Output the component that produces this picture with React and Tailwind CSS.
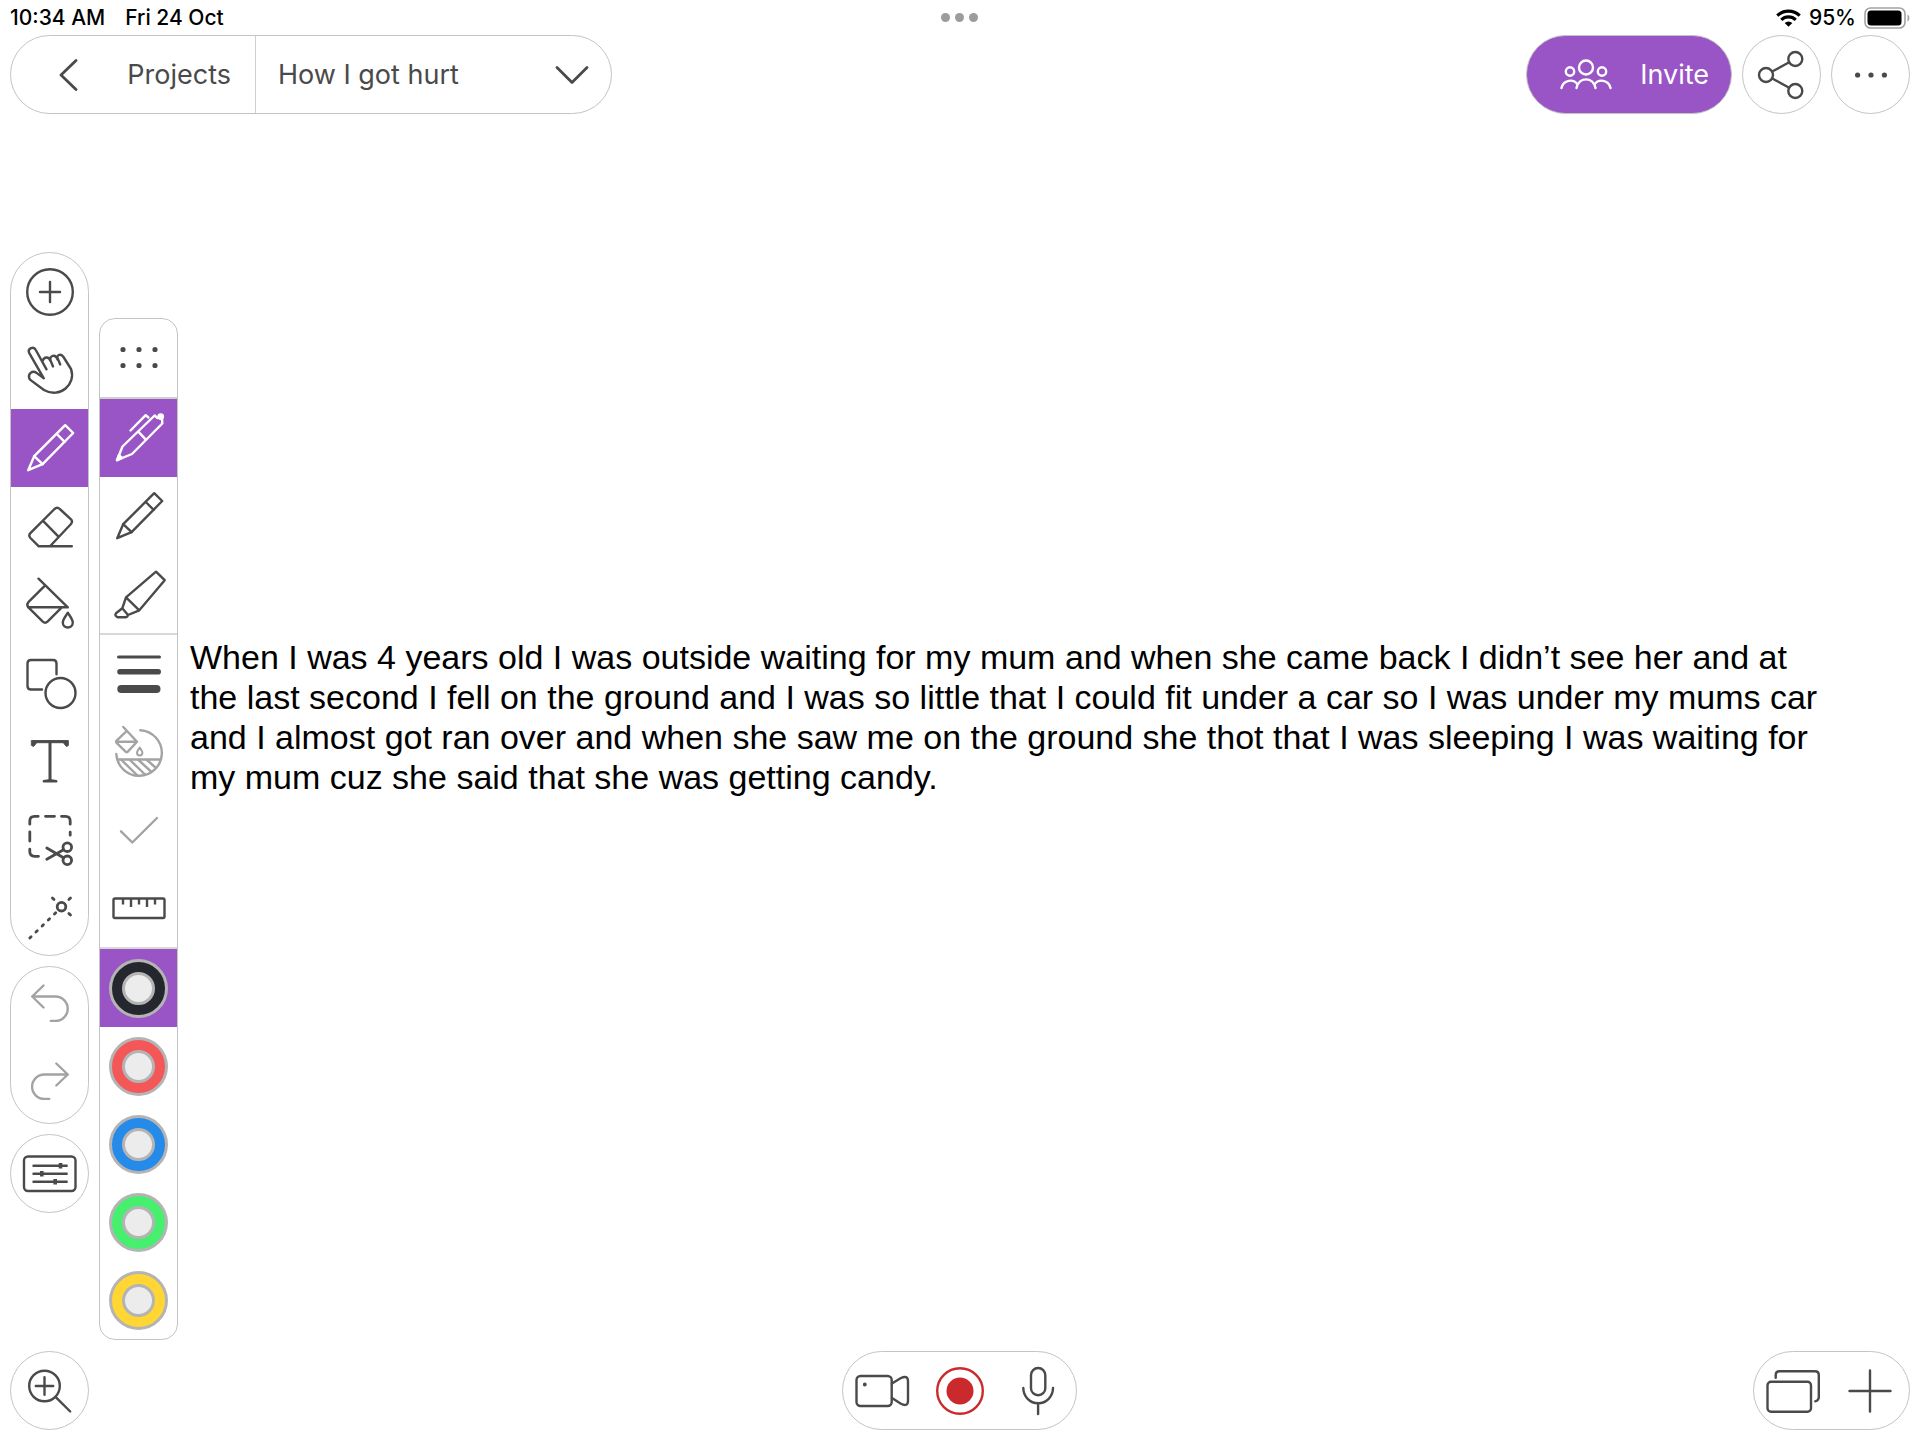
const INK = '#4a4a4a';
const MUTED = '#a3a3a3';

function Icon({ color = INK, width = 2.4, children }) {
  return (
    <svg
      className="size-[72px] shrink-0"
      viewBox="3 3 72 72"
      fill="none"
      stroke={color}
      strokeWidth={width}
      strokeLinecap="round"
      strokeLinejoin="round"
      aria-hidden="true"
    >
      {children}
    </svg>
  );
}

const pencil = (
  <>
    <path d="M54.2 16.2 62.2 24 31.6 55.2 17.2 61.2 23.2 47.2Z" />
    <path d="M45.8 25 53.6 32.8M23.2 47.2 31.6 55.2" />
  </>
);

const tools = [
  { label: 'Add', art: <><circle cx="39" cy="39" r="22.800" /><path d="M39 29V49M29 39H49" /></> },
  {
    label: 'Hand',
    art: (
      <path d="M35.5 38.3 24.8 19C22.8 14.8 16.4 17.3 18 21.7L32.8 47.3 25.2 41.6C21 39.3 17 43 18.2 47Q18.4 48.2 20 49.4L33 59C49 68 65.500 53 60 38L52.5 26C50 22 45.500 24 46.500 27L49.200 33.500M46.500 28.500C45 23 38 24 39.500 29.500L42 35.500M39.500 30C38 25 33 25.500 31.500 30" />
    ),
  },
  { label: 'Pencil', active: true, art: pencil },
  {
    label: 'Eraser',
    art: <path d="M60.800 59.300H27.800L19.400 51Q17.200 48.500 19.400 46.200L43.500 22Q46.200 19.500 48.800 22L60 32.300Q62 34.500 60 37L39.500 58.700M31.800 33.700 47.500 49.700" />,
  },
  {
    label: 'Fill',
    art: (
      <>
        <path d="M27.500 13.700 56.800 42.300H17M34.200 20.300 17.400 37.200Q15.200 39.600 17.400 42.300L31.800 56.700Q34.200 58.800 36.500 56.700L50.800 42.300" />
        <path d="M56.800 47.700C54.500 51.500 51.800 54.500 51.800 57.500A5 5 0 0 0 61.800 57.500C61.800 54.500 59.100 51.500 56.800 47.700Z" />
      </>
    ),
  },
  {
    label: 'Shapes',
    art: (
      <>
        <path d="M45.500 31.300V20.500Q45.500 17 42 17H20Q16.500 17 16.500 20.500V43Q16.500 46.500 20 46.500H31" />
        <circle cx="49.500" cy="50" r="15" />
      </>
    ),
  },
  {
    label: 'Text',
    art: (
      <>
        <path d="M20.700 19.600H57.300V24.500L55.500 25.500 52.300 21.700H25.700L22.500 25.500 20.700 24.500Z" fill={INK} strokeWidth="1" />
        <path d="M39 21V59" strokeWidth="3" />
        <path d="M32.800 60.300H45.300L39 59.300Z" />
      </>
    ),
  },
  {
    label: 'Cut',
    width: 2.8,
    art: (
      <>
        <path d="M18.800 25.200V22Q18.800 17.300 23.500 17.300H27.200M34.500 17.300H43.500M50.500 17.300H54.500Q59.200 17.300 59.200 22V25.200M59.200 33.200V36.200M18.800 32.800V42M18.800 50.200V52.600Q18.800 57.300 23.500 57.300H27.500" />
        <path d="M35.800 49 52.500 58.700M35.800 60.300 52.500 50.700" />
        <circle cx="56.300" cy="48.200" r="4.300" />
        <circle cx="56.300" cy="61.300" r="4.300" />
      </>
    ),
  },
  {
    label: 'Laser pointer',
    width: 2.8,
    art: (
      <>
        <circle cx="50.500" cy="29.700" r="4.300" />
        <path d="M41.400 20.900 43 22.500M59.500 20.900 57.900 22.500M57.900 36.500 59.500 38.100" />
        <path d="M18.800 61 45 35.500" strokeDasharray="1.800 6.800" />
      </>
    ),
  },
];

const history = [
  { label: 'Undo', color: MUTED, art: <path d="M32.500 18.500 21.200 29.500 32.500 40.500M21.200 29.500H44.500A12.200 12.200 0 0 1 44.500 53.900H39.800" /> },
  { label: 'Redo', color: MUTED, art: <path d="M45.300 18.500 56.800 29.500 45.300 40.500M56.800 29.500H33.300A12.200 12.200 0 0 0 33.300 53.900H38.200" /> },
];

const pens = [
  {
    label: 'Pen',
    active: true,
    art: (
      <>
        <path d="M17 61.200 22.500 47.500 54.600 16.500 57.500 19M17 61.200 32 55 62.300 24.500 62 19M38.300 32.700 45.600 40.300M30.500 31.500 45.700 16.200 48.400 18.500" />
        <path d="M17 61.200 19 56 22 59Z" fill="#fff" />
        <circle cx="60.700" cy="17.600" r="2.200" fill="#fff" />
      </>
    ),
  },
  { label: 'Fine pencil', art: pencil },
  {
    label: 'Highlighter',
    art: <path d="M26 42.300 56 16.700 64.700 25.200 39.300 55.300ZM26 42.300 22.300 53.300 28 60 39.300 55.300M22.300 53.300 16 58.300Q14.200 60.500 17.500 62.300H25.300Q27.600 62 28 60" />,
  },
];

const options = [
  {
    label: 'Line thickness',
    art: (
      <>
        <path d="M18.500 22H59.500" strokeWidth="3" />
        <path d="M20 36.700H58.200" strokeWidth="5.600" />
        <path d="M21.300 54H56.500" strokeWidth="8" />
      </>
    ),
  },
  {
    label: 'Fill style',
    color: MUTED,
    art: (
      <>
        <path d="M40.300 17.200A22.800 22.800 0 1 1 16.300 41M17.500 46.500H60.500" />
        <path d="M23.300 14 37 28.700 27.800 38.600Q26.700 39.700 25.600 38.600L16.600 29.800Q15.500 28.700 16.600 27.600L26.700 18M16.500 28.700H37" />
        <path d="M39.700 34.500C38.500 36.500 37 38 37 39.700A2.700 2.700 0 0 0 42.400 39.700C42.400 38 40.900 36.500 39.700 34.500Z" strokeWidth="2" />
        <path d="M21.500 47 37.500 62.500M30 47 45 61.500M38.500 47 51 58.500M47 47 56 55" />
      </>
    ),
  },
  { label: 'Confirm', color: MUTED, art: <path d="M21 40.300 32.300 51.500 57 27" /> },
  {
    label: 'Ruler',
    art: (
      <>
        <rect x="13.500" y="29.500" width="51" height="19.500" rx="1.500" />
        <path d="M23 30V35.500M31 30V38M39 30V35.500M47 30V38M55 30V35.500" strokeLinecap="butt" />
      </>
    ),
  },
];

const swatches = [
  { label: 'Black', fill: 'bg-[#25272e]', active: true },
  { label: 'Red', fill: 'bg-[#f45757]' },
  { label: 'Blue', fill: 'bg-[#258ae8]' },
  { label: 'Green', fill: 'bg-[#46f06e]' },
  { label: 'Yellow', fill: 'bg-[#ffd634]' },
];

function Cell({ item }) {
  return (
    <button
      type="button"
      aria-label={item.label}
      aria-pressed={item.active ? true : undefined}
      className={`flex h-[78px] w-full items-center justify-center ${item.active ? 'bg-[#9955c6]' : ''}`}
    >
      <Icon color={item.active ? '#fff' : item.color} width={item.width}>{item.art}</Icon>
    </button>
  );
}

function RoundButton({ label, children }) {
  return (
    <button type="button" aria-label={label} className="flex size-[79px] items-center justify-center rounded-full border border-[#c4c4c4] bg-white">
      <Icon>{children}</Icon>
    </button>
  );
}

function StatusBar() {
  return (
    <div className="grid h-[35px] grid-cols-3 items-center px-[10px] text-[21px] font-medium text-black">
      <div className="flex gap-5">
        <span>10:34 AM</span>
        <span>Fri 24 Oct</span>
      </div>
      <div className="flex justify-center gap-[5px]">
        <span className="size-[9px] rounded-full bg-[#9c9c9c]" />
        <span className="size-[9px] rounded-full bg-[#9c9c9c]" />
        <span className="size-[9px] rounded-full bg-[#9c9c9c]" />
      </div>
      <div className="flex items-center justify-end gap-2">
        <svg className="h-[18px] w-[25px]" viewBox="0 0 25 18" fill="none" stroke="#000" strokeWidth="3.200" aria-hidden="true">
          <path d="M1.300 6.700A16 16 0 0 1 23.700 6.700M5.300 10.800A10.300 10.300 0 0 1 19.700 10.800" />
          <path d="M12.500 17.800 8.700 14A5.400 5.400 0 0 1 16.300 14Z" fill="#000" stroke="none" />
        </svg>
        <span>95%</span>
        <svg className="h-[22px] w-[46px]" viewBox="0 0 46 22" aria-hidden="true">
          <rect x="1" y="1" width="40" height="20" rx="5.500" fill="none" stroke="#a3a3a3" strokeWidth="1.600" />
          <rect x="3.500" y="3.500" width="34" height="15" rx="3.500" />
          <path d="M43.500 7.500C46 8.500 46 13.500 43.500 14.500Z" fill="#a3a3a3" />
        </svg>
      </div>
    </div>
  );
}

function TopBar() {
  return (
    <header className="flex justify-between px-[10px] text-[27px] text-[#4a4a4a]">
      <nav className="flex h-[79px] rounded-full border border-[#c4c4c4]">
        <a href="#projects" className="flex w-[245px] items-center justify-between border-r border-[#cfcfcf] pr-6 pl-12">
          <svg className="h-8 w-5" viewBox="0 0 20 32" fill="none" stroke={INK} strokeWidth="2.800" strokeLinecap="round" strokeLinejoin="round" aria-hidden="true">
            <path d="M17 1.500 2 16 17 30.500" />
          </svg>
          <span className="pt-0.5">Projects</span>
        </a>
        <button type="button" className="flex w-[355px] items-center justify-between pr-[22px] pl-[22px]">
          <span className="pt-0.5">How I got hurt</span>
          <svg className="h-5 w-[34px]" viewBox="0 0 34 20" fill="none" stroke={INK} strokeWidth="2.800" strokeLinecap="round" strokeLinejoin="round" aria-hidden="true">
            <path d="M2 2.500 17 17.500 32 2.500" />
          </svg>
        </button>
      </nav>
      <div className="flex gap-[10px]">
        <button type="button" className="flex h-[79px] w-[206px] items-center justify-between rounded-full border border-[#c4c4c4] bg-[#9955c6] pr-[22px] pl-[33px] text-white">
          <svg className="h-8 w-[52px]" viewBox="0 0 52 32" fill="none" stroke="#fff" strokeWidth="2.400" strokeLinecap="round" aria-hidden="true">
            <circle cx="26" cy="8.500" r="7" />
            <circle cx="10" cy="12.500" r="4.200" />
            <circle cx="42" cy="12.500" r="4.200" />
            <path d="M1.500 29C3.500 20.500 13.500 19.500 17.500 25.500M16.500 29C19 17.500 33 17.500 35.500 29M34.500 25.500C38.500 19.500 48.500 20.500 50.500 29" />
          </svg>
          <span className="pt-0.5">Invite</span>
        </button>
        <RoundButton label="Share">
          <circle cx="23" cy="39" r="7" />
          <circle cx="52.300" cy="23" r="7" />
          <circle cx="52.300" cy="55" r="7" />
          <path d="M29.200 35.500 46.200 26.300M29.200 42.500 46.200 51.700" />
        </RoundButton>
        <RoundButton label="More">
          <path d="M25.600 39h.01M39 39h.01M52.400 39h.01" strokeWidth="5.200" />
        </RoundButton>
      </div>
    </header>
  );
}

function ToolBar() {
  return (
    <aside className="mt-[138px] flex w-[79px] shrink-0 flex-col gap-[10px]">
      <div className="overflow-hidden rounded-[40px] border border-[#c4c4c4]">
        {tools.map((t) => <Cell key={t.label} item={t} />)}
      </div>
      <div className="overflow-hidden rounded-[40px] border border-[#c4c4c4]">
        {history.map((h) => <Cell key={h.label} item={h} />)}
      </div>
      <RoundButton label="Settings">
        <rect x="13" y="21.500" width="51.500" height="34.500" rx="4" />
        <path d="M22.500 30.700H55.700M22.500 38.700H55.700M22.500 46.700H55.700" />
        <path d="M49.500 29.700V31.700M30.800 37.700V39.700M44.200 45.700V47.700" strokeWidth="3.600" strokeLinecap="square" />
      </RoundButton>
    </aside>
  );
}

function PenPanel() {
  return (
    <aside className="mt-[204px] w-[79px] shrink-0 self-start overflow-hidden rounded-2xl border border-[#c4c4c4]">
      <div className="border-b-2 border-[#cfcfcf]">
        <Cell
          item={{
            label: 'Move panel',
            art: <path d="M23 30.500h.01M39 30.500h.01M55 30.500h.01M23 46.500h.01M39 46.500h.01M55 46.500h.01" strokeWidth="5.200" />,
          }}
        />
      </div>
      <div className="border-b-2 border-[#d8d8d8]">
        {pens.map((p) => <Cell key={p.label} item={p} />)}
      </div>
      <div className="border-b-2 border-[#d8d8d8]">
        {options.map((o) => <Cell key={o.label} item={o} />)}
      </div>
      {swatches.map((s) => (
        <button
          key={s.label}
          type="button"
          aria-label={s.label}
          aria-pressed={s.active ? true : undefined}
          className={`flex h-[78px] w-full items-center justify-center ${s.active ? 'bg-[#9955c6]' : ''}`}
        >
          <span className={`flex size-[59px] items-center justify-center rounded-full border-[3px] border-[#b4b4b4] ${s.fill}`}>
            <span className="size-[33px] rounded-full border-[3px] border-[#b4b4b4] bg-[#ececec]" />
          </span>
        </button>
      ))}
    </aside>
  );
}

function Dock() {
  return (
    <footer className="grid grid-cols-3 px-[10px] pb-[10px]">
      <div>
        <RoundButton label="Zoom in">
          <circle cx="33.500" cy="34" r="15.300" />
          <path d="M33.500 25.300V42.700M24.800 34H42.200M44.500 44.800 59.200 59.500" />
        </RoundButton>
      </div>
      <div className="flex justify-center">
        <div className="flex h-[79px] w-[235px] items-center rounded-full border border-[#c4c4c4]">
          <Cell
            item={{
              label: 'Camera',
              art: (
                <>
                  <rect x="13.500" y="24" width="35.200" height="30" rx="4" />
                  <circle cx="21.800" cy="32.500" r="1.200" fill={INK} strokeWidth="1.500" />
                  <path d="M49 31.500 57.500 26.300Q65 22.500 65 29.500V48.500Q65 55.500 57.500 51.500L49 46" />
                </>
              ),
            }}
          />
          <Cell
            item={{
              label: 'Record',
              color: '#cb2a2c',
              art: <><circle cx="39" cy="39" r="22.800" /><circle cx="39" cy="39" r="13.500" fill="#cb2a2c" stroke="none" /></>,
            }}
          />
          <Cell
            item={{
              label: 'Microphone',
              art: <><rect x="32" y="16" width="14.300" height="27.300" rx="7.150" /><path d="M24.300 36A14.850 15.300 0 0 0 54 36M39.100 51.300V62" /></>,
            }}
          />
        </div>
      </div>
      <div className="flex justify-end">
        <div className="flex h-[79px] w-[157px] items-center rounded-full border border-[#c4c4c4]">
          <Cell
            item={{
              label: 'Slides',
              art: (
                <>
                  <rect x="13.500" y="29.800" width="43.500" height="30" rx="3.500" />
                  <path d="M21.700 25.700V23Q21.700 19.200 25.500 19.200H61Q64.800 19.200 64.800 23V45.500Q64.500 48.500 61.300 49.300" />
                </>
              ),
            }}
          />
          <Cell item={{ label: 'Add slide', art: <path d="M39 18.500V59.500M18.500 39H59.500" /> }} />
        </div>
      </div>
    </footer>
  );
}

export default function App() {
  return (
    <div className="flex min-h-screen flex-col bg-white font-['Inter',sans-serif]">
      <StatusBar />
      <TopBar />
      <main className="flex flex-1 gap-[10px] px-[10px]">
        <ToolBar />
        <PenPanel />
        <p className="mt-[523px] pl-0.5 font-['Liberation_Sans',Arial,sans-serif] text-[34px] leading-10 text-black">
          When I was 4 years old I was outside waiting for my mum and when she came back I didn’t see her and at
          <br />
          the last second I fell on the ground and I was so little that I could fit under a car so I was under my mums car
          <br />
          and I almost got ran over and when she saw me on the ground she thot that I was sleeping I was waiting for
          <br />
          my mum cuz she said that she was getting candy.
        </p>
      </main>
      <Dock />
    </div>
  );
}
